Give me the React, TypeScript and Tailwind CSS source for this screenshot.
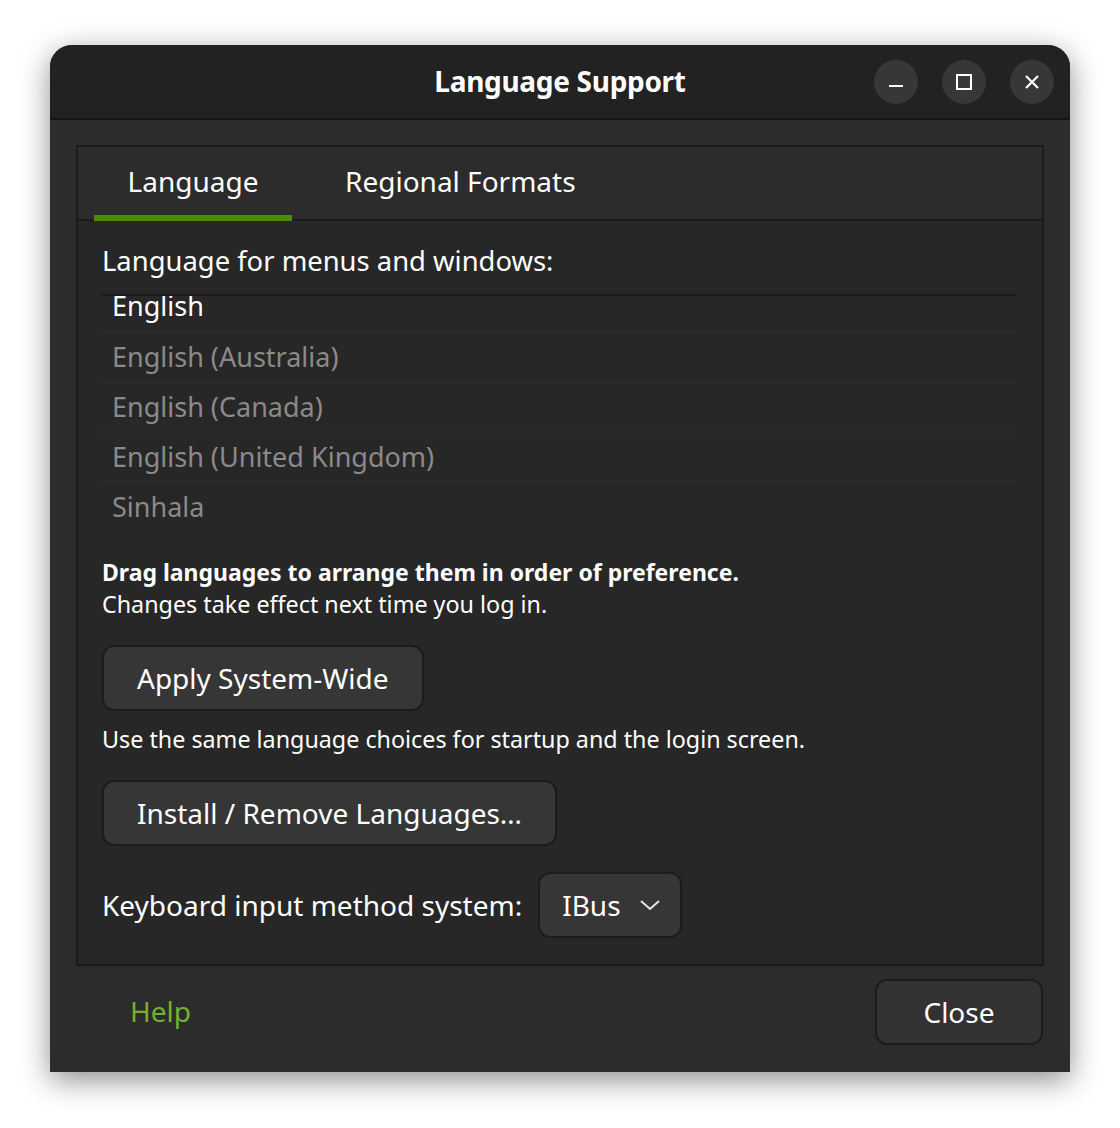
import React from 'react';

const FONT = { fontFamily: '"Noto Sans", "Open Sans", sans-serif' };

function WinButton({ children }: { children: React.ReactNode }) {
  return (
    <div className="w-[44px] h-[44px] rounded-full bg-[#373737] flex items-center justify-center text-white">
      {children}
    </div>
  );
}

function Chevron() {
  return (
    <svg width="22" height="12" viewBox="0 0 22 12" fill="none">
      <path d="M2 2 L11 10 L20 2" stroke="#e6e6e6" strokeWidth="2" />
    </svg>
  );
}

const languages = ['English (Australia)', 'English (Canada)', 'English (United Kingdom)', 'Sinhala'];

export default function App() {
  return (
    <div className="w-[1120px] h-[1128px] bg-white pt-[45px] pl-[50px]" style={FONT}>
      <div className="w-[1020px] h-[1027px] rounded-t-[22px] bg-[#2c2c2c] flex flex-col overflow-hidden shadow-[0_8px_30px_rgba(0,0,0,0.45)]">
        {/* Title bar */}
        <div className="h-[75px] shrink-0 bg-[#222222] border-b-2 border-[#161616] relative flex items-center justify-center">
          <span className="text-white text-[28px] font-bold tracking-[-0.3px] -mt-[2px]">Language Support</span>
          <div className="absolute right-[16px] top-[15px] flex gap-[24px]">
            <WinButton>
              <svg width="16" height="16" viewBox="0 0 16 16"><rect x="1" y="11" width="14" height="2" fill="#fff" /></svg>
            </WinButton>
            <WinButton>
              <svg width="16" height="16" viewBox="0 0 16 16"><rect x="1" y="1" width="14" height="14" fill="none" stroke="#fff" strokeWidth="2" /></svg>
            </WinButton>
            <WinButton>
              <svg width="16" height="16" viewBox="0 0 16 16"><path d="M2 2 L14 14 M14 2 L2 14" stroke="#fff" strokeWidth="2.2" /></svg>
            </WinButton>
          </div>
        </div>

        {/* Body */}
        <div className="flex-1 flex flex-col px-[26px] pt-[25px]">
          <div className="h-[821px] border-2 border-[#1b1b1b] flex flex-col">
            {/* Tabs */}
            <div className="h-[74px] shrink-0 bg-[#2c2c2c] border-b-2 border-[#1b1b1b] flex pl-[16px]">
              <div className="w-[198px] flex items-center justify-center text-white text-[28px] border-b-[6px] border-[#4e8a05] -mb-[2px]">
                Language
              </div>
              <div className="px-[53px] flex items-center text-white text-[28px] -mt-[4px]">Regional Formats</div>
            </div>

            {/* Content */}
            <div className="flex-1 bg-[#272727] px-[24px] pt-[20px] text-white">
              <div className="text-[27.4px] leading-[40px]">Language for menus and windows:</div>
              {/* scrolled list, first row partly hidden */}
              <div className="mt-[13px] border-t-2 border-[#1c1c1c] h-[236px] overflow-hidden mr-[2px]">
                <div className="h-[50px] flex items-center pl-[10px] text-white text-[27px] -mt-[15px]">
                  English
                </div>
                {languages.map((l) => (
                  <div key={l} className="h-[50px] border-t-2 border-[#2c2c2c] flex items-center pl-[10px] text-[#8a8a8a] text-[27px]">
                    {l}
                  </div>
                ))}
              </div>

              <div className="mt-[26px] text-[23px] font-bold leading-[32px]">Drag languages to arrange them in order of preference.</div>
              <div className="text-[23.3px] leading-[32px]">Changes take effect next time you log in.</div>

              <button className="mt-[25px] h-[66px] px-[33px] rounded-[12px] bg-[#363636] border-2 border-[#1c1c1c] text-white text-[28px]">
                Apply System-Wide
              </button>
              <div className="mt-[12px] text-[23.3px] leading-[32px]">Use the same language choices for startup and the login screen.</div>
              <button className="mt-[25px] h-[66px] px-[33px] rounded-[12px] bg-[#363636] border-2 border-[#1c1c1c] text-white text-[28px]">
                Install / Remove Languages…
              </button>

              <div className="mt-[26px] flex items-center gap-[16px]">
                <span className="text-[28px]">Keyboard input method system:</span>
                <div className="h-[66px] w-[144px] rounded-[12px] bg-[#363636] border-2 border-[#1c1c1c] flex items-center pl-[22px] gap-[18px] text-[28px]">
                  <span>IBus</span>
                  <Chevron />
                </div>
              </div>
            </div>
          </div>

          {/* Footer */}
          <div className="flex items-center justify-between mt-[13px] pl-[54px] pr-[1px]">
            <span className="text-[#73b132] text-[28px] -mt-[2px]">Help</span>
            <button className="h-[66px] w-[168px] rounded-[12px] bg-[#323232] border-2 border-[#1c1c1c] text-white text-[28px]">
              Close
            </button>
          </div>
        </div>
      </div>
    </div>
  );
}
